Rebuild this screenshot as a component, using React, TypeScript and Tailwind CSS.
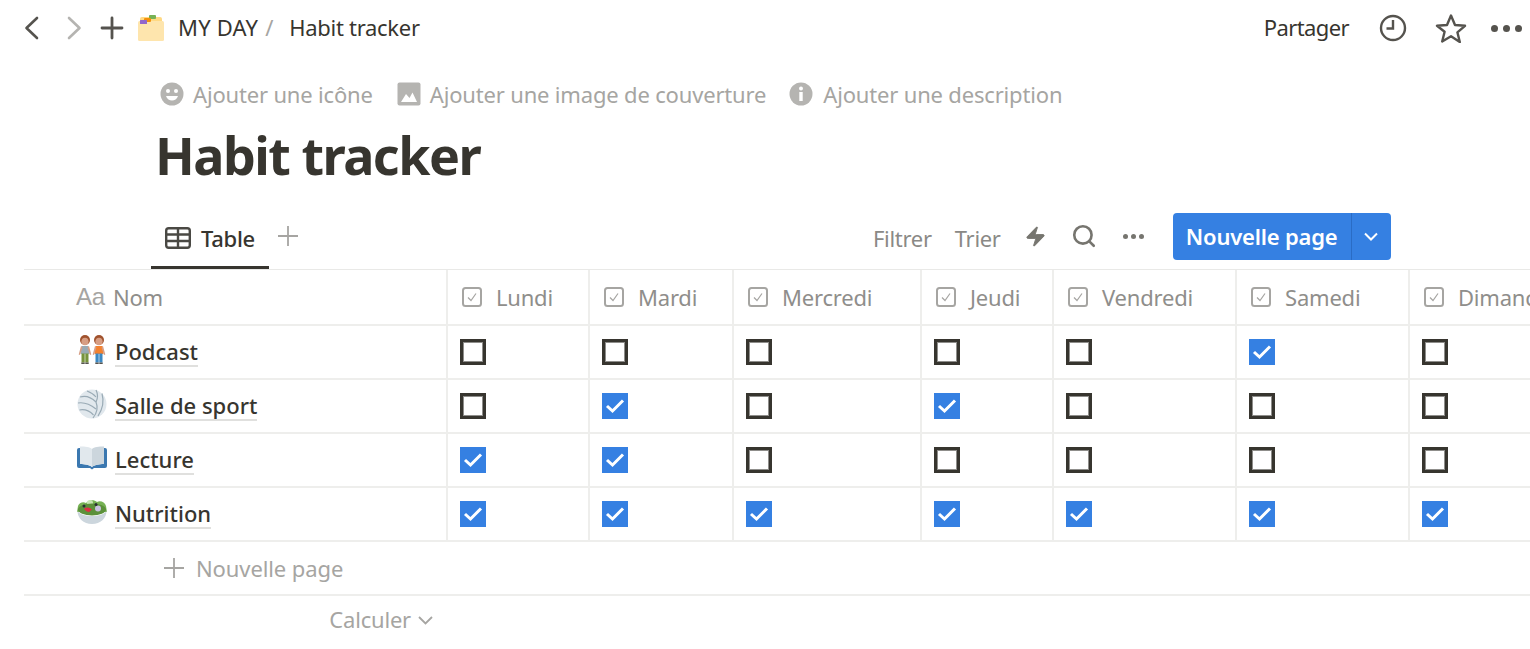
import React from 'react';
import { Search, Zap } from 'lucide-react';

const columns = [
  { name: 'Lundi', width: 'w-[142px]' },
  { name: 'Mardi', width: 'w-[144px]' },
  { name: 'Mercredi', width: 'w-[188px]' },
  { name: 'Jeudi', width: 'w-[132px]' },
  { name: 'Vendredi', width: 'w-[183px]' },
  { name: 'Samedi', width: 'w-[173px]' },
  { name: 'Dimanche', width: 'w-[160px]' },
];

function PeopleIcon() {
  const person = (x: number, shirt: string, legs: string) => (
    <g transform={`translate(${x} 0)`}>
      <circle cx="6.500" cy="5" r="5" fill="#a0522d" />
      <ellipse cx="6.500" cy="6.500" rx="3.600" ry="3.800" fill="#d79e84" />
      <path d="M3 11h7l1 8H2z" fill={shirt} />
      <path d="M2.500 11l-2.300 8.500 1.300.4 2.500-7.500zM10.500 11l2.300 8.500-1.300.4-2.500-7.500z" fill="#d79e84" />
      <rect x="3" y="18.500" width="3.200" height="9" fill={legs} />
      <rect x="6.800" y="18.500" width="3.200" height="9" fill={legs} />
      <rect x="2.800" y="27.500" width="3.400" height="1.500" fill="#55534e" />
      <rect x="6.800" y="27.500" width="3.400" height="1.500" fill="#55534e" />
    </g>
  );
  return (
    <svg width="28" height="30" viewBox="0 0 28 30" className="block">
      {person(0.500, '#99aab5', '#77933c')}
      {person(14.500, '#f4812e', '#3b88c3')}
    </svg>
  );
}

function BallIcon() {
  return (
    <svg width="30" height="30" viewBox="0 0 30 30" className="block">
      <circle cx="15" cy="15" r="14.500" fill="#e1e8ed" />
      <g fill="none" stroke="#99aab5" strokeWidth="1.200">
        <path d="M19 13C14 8 9 6 3 8" />
        <path d="M19 13c2-4 2-8 0-12" />
        <path d="M19 13c2 5 1 11-3 16" />
        <path d="M10 2c4 1.500 7 3.500 9 6" />
        <path d="M25 4.500c2 7 1 15-4 22.500" />
        <path d="M1 14c6-1 13 2 18 6" />
        <path d="M2.500 21c5-1 10 1 14 5" />
      </g>
    </svg>
  );
}

function BookIcon() {
  return (
    <svg width="30" height="24" viewBox="0 0 30 24" className="block">
      <path d="M0 4a2 2 0 0 1 2-2h1v16c5 0 10 1 12 3 2-2 7-3 12-3V2h1a2 2 0 0 1 2 2v16a2 2 0 0 1-2 2H17l-2 1.500-2-1.500H2a2 2 0 0 1-2-2z" fill="#3b78b0" />
      <path d="M3 .5c5 0 10 .5 12 2.500v18c-2-2-7-3-12-3z" fill="#e1e8ed" />
      <path d="M27 .5c-5 0-10 .5-12 2.500v18c2-2 7-3 12-3z" fill="#ccd6dd" />
    </svg>
  );
}

function SaladIcon() {
  return (
    <svg width="30" height="26" viewBox="0 0 30 26" className="block">
      <path d="M1 7c1-3 5-5 8-3 2-3 8-4 11-1 3-2 8 0 9 4l1 6H0z" fill="#77b255" />
      <circle cx="13" cy="4" r="3" fill="#c6e5b3" />
      <ellipse cx="15" cy="10.500" rx="14" ry="6" fill="#5c913b" />
      <path d="M7 9.500c3-2 6-1 8 1l-3 2.500c-2 0-4-1.500-5-3.500z" fill="#dd2e44" />
      <circle cx="21" cy="9.500" r="3" fill="#c8c0e0" />
      <circle cx="7" cy="7" r="1.500" fill="#292f33" />
      <circle cx="19" cy="5.500" r="1.500" fill="#292f33" />
      <path d="M.5 12c2 3 8 5 14.500 5s12.500-2 14.500-5c0 7-6 13-14.500 13S.5 19 .5 12z" fill="#ccd6dd" />
    </svg>
  );
}

function FolderIcon() {
  return (
    <svg width="28" height="28" viewBox="0 0 28 28" className="block">
      <path d="M3 5a2 2 0 0 1 2-2h18a2 2 0 0 1 2 2v4H3z" fill="#ffd983" />
      <rect x="1" y="7" width="26" height="20" rx="1.500" fill="#fee5ad" />
      <rect x="12" y="1" width="7" height="4" rx="1" fill="#77b255" />
      <rect x="7" y="4" width="7" height="4" rx="1" fill="#f4900c" />
      <rect x="3" y="6" width="7" height="4" rx="0.500" fill="#9266cc" />
    </svg>
  );
}

function TableIcon() {
  return (
    <svg width="26" height="22" viewBox="0 0 26 22" className="block" fill="none" stroke="#4a4944" strokeWidth="2.400">
      <rect x="1.200" y="1.200" width="23.600" height="19.600" rx="2.500" />
      <path d="M1 7.500h24M1 14h24M13 1v20" />
    </svg>
  );
}

function PropIcon() {
  return (
    <svg width="20" height="20" viewBox="0 0 20 20" className="block shrink-0" fill="none" stroke="#a6a5a2">
      <rect x="1" y="1" width="18" height="18" rx="2.500" strokeWidth="2" />
      <path d="M6 10.500l3 3 5-7" strokeWidth="1.200" />
    </svg>
  );
}

function Checkbox({ checked }: { checked: boolean }) {
  if (checked) {
    return (
      <div className="w-[26px] h-[26px] bg-[#3580e2] flex items-center justify-center">
        <svg width="20" height="16" viewBox="0 0 20 16" fill="none" stroke="white" strokeWidth="3">
          <path d="M2 8l5.500 5L18 2.500" />
        </svg>
      </div>
    );
  }
  return <div className="w-[26px] h-[26px] border-[3px] border-[#37352f] outline outline-1 -outline-offset-4 outline-[#8f8e8b]" />;
}

const rows = [
  { name: 'Podcast', icon: <PeopleIcon />, values: [0, 0, 0, 0, 0, 1, 0] },
  { name: 'Salle de sport', icon: <BallIcon />, values: [0, 1, 0, 1, 0, 0, 0] },
  { name: 'Lecture', icon: <BookIcon />, values: [1, 1, 0, 0, 0, 0, 0] },
  { name: 'Nutrition', icon: <SaladIcon />, values: [1, 1, 1, 1, 1, 1, 1] },
];

export default function App() {
  return (
    <div className="w-[1530px] h-[649px] overflow-hidden bg-white text-[#37352f] font-['Noto_Sans','Open_Sans',sans-serif]">
      {/* topbar */}
      <div className="h-[56px] flex items-center justify-between pl-[24px] pr-[8px]">
        <div className="flex items-center">
          <svg width="16" height="24" viewBox="0 0 16 24" fill="none" stroke="#55534e" strokeWidth="2.600" strokeLinecap="round" strokeLinejoin="round" className="block">
            <path d="M13 2L2.500 12 13 22" />
          </svg>
          <svg width="16" height="24" viewBox="0 0 16 24" fill="none" stroke="#b5b4b1" strokeWidth="2.600" strokeLinecap="round" strokeLinejoin="round" className="block ml-[26px]">
            <path d="M3 2l10.500 10L3 22" />
          </svg>
          <svg width="24" height="24" viewBox="0 0 24 24" fill="none" stroke="#55534e" strokeWidth="2.800" strokeLinecap="round" className="block ml-[18px]">
            <path d="M12 2v20M2 12h20" />
          </svg>
          <div className="ml-[13px]"><FolderIcon /></div>
          <span className="ml-[13px] mb-[2px] text-[22px] tracking-[0.2px]">MY DAY</span>
          <span className="ml-[7px] mb-[2px] text-[22px] text-[#a6a5a2]">/</span>
          <span className="ml-[16px] mb-[2px] text-[22px] tracking-[-0.3px]">Habit tracker</span>
        </div>
        <div className="flex items-center">
          <span className="mb-[2px] text-[22px] tracking-[-0.6px]">Partager</span>
          <svg width="28" height="28" viewBox="0 0 28 28" fill="none" stroke="#55534e" strokeWidth="2.400" className="block ml-[30px]">
            <circle cx="14" cy="14" r="12" />
            <path d="M14 6v8.500H7.500" />
          </svg>
          <svg width="32" height="30" viewBox="0 0 32 30" fill="none" stroke="#55534e" strokeWidth="2.400" strokeLinejoin="round" className="block ml-[28px]">
            <path d="M16 2.500l4 9.500 10 .8-7.600 6.500 2.400 9.700L16 23.300l-8.800 5.200 2.400-9.700L2 12.800l10-.8z" />
          </svg>
          <div className="ml-[24px] flex gap-[5px]">
            <div className="w-[7px] h-[7px] rounded-full bg-[#55534e]" />
            <div className="w-[7px] h-[7px] rounded-full bg-[#55534e]" />
            <div className="w-[7px] h-[7px] rounded-full bg-[#55534e]" />
          </div>
        </div>
      </div>

      {/* page actions */}
      <div className="mt-[23px] ml-[160px] h-[30px] flex items-center text-[#a6a5a2] text-[22px] tracking-[-0.17px]">
        <svg width="24" height="24" viewBox="0 0 24 24" className="block">
          <circle cx="12" cy="12" r="11.500" fill="#b5b4b1" />
          <circle cx="8" cy="9" r="2" fill="white" />
          <circle cx="16" cy="9" r="2" fill="white" />
          <path d="M6 14h12c-1 3-3.500 4.500-6 4.500S7 17 6 14z" fill="white" />
        </svg>
        <span className="ml-[9px]">Ajouter une icône</span>
        <svg width="24" height="24" viewBox="0 0 24 24" className="block ml-[24px]">
          <rect x="0.500" y="0.500" width="23" height="23" rx="2" fill="#b5b4b1" />
          <path d="M4 20l5-8 3.500 4 3-5.500L20 20z" fill="white" />
        </svg>
        <span className="ml-[9px]">Ajouter une image de couverture</span>
        <svg width="24" height="24" viewBox="0 0 24 24" className="block ml-[23px]">
          <circle cx="12" cy="12" r="11.500" fill="#b5b4b1" />
          <circle cx="12" cy="6.500" r="2" fill="white" />
          <rect x="10.300" y="10" width="3.400" height="9" fill="white" />
        </svg>
        <span className="ml-[10px]">Ajouter une description</span>
      </div>

      {/* title */}
      <h1 className="ml-[155px] mt-[13px] h-[66px] text-[52px] leading-[66px] font-bold tracking-[-1.5px]">Habit tracker</h1>

      {/* view bar */}
      <div className="mt-[24px] h-[57px] flex items-start">
        <div className="ml-[151px] w-[118px] h-[57px] border-b-[3px] border-[#37352f] flex items-center pl-[14px] pb-[2px]">
          <TableIcon />
          <span className="ml-[10px] text-[22px] font-medium tracking-[-0.3px]">Table</span>
        </div>
        <svg width="22" height="22" viewBox="0 0 22 22" fill="none" stroke="#a6a5a2" strokeWidth="1.800" className="block ml-[8px] mt-[13px]">
          <path d="M11 1v20M1 11h20" />
        </svg>
        <div className="ml-[574px] h-[48px] flex items-center text-[#8a8986] text-[22px] tracking-[-0.3px]">
          <span className="mt-[5px]">Filtrer</span>
          <span className="ml-[23px] mt-[5px]">Trier</span>
          <Zap size={23} fill="#76756f" stroke="#76756f" strokeWidth={1} className="ml-[23px]" />
          <Search size={26} stroke="#76756f" strokeWidth={2.400} className="ml-[24px]" />
          <div className="ml-[26px] flex gap-[3px]">
            <div className="w-[5px] h-[5px] rounded-full bg-[#76756f]" />
            <div className="w-[5px] h-[5px] rounded-full bg-[#76756f]" />
            <div className="w-[5px] h-[5px] rounded-full bg-[#76756f]" />
          </div>
          <div className="ml-[29px] w-[218px] h-[47px] rounded-[4px] bg-[#3580e2] flex items-stretch text-white text-[22px] font-semibold tracking-[-0.2px]">
            <div className="w-[179px] flex items-center justify-center border-r border-[#2a6cc5] whitespace-nowrap">Nouvelle page</div>
            <div className="flex-1 flex items-center justify-center">
              <svg width="14" height="9" viewBox="0 0 14 9" fill="none" stroke="white" strokeWidth="2" className="block">
                <path d="M1 1.500l6 6 6-6" />
              </svg>
            </div>
          </div>
        </div>
      </div>

      {/* table */}
      <div className="ml-[24px] border-t border-[#e9e9e7]">
        <div className="h-[56px] flex border-b-2 border-[#eeeeec]">
          <div className="w-[422px] shrink-0 flex items-center pl-[52px] text-[#8f8e8b] text-[22px] tracking-[-0.2px]">
            <span className="font-['Liberation_Sans',sans-serif] text-[24px] text-[#a6a5a2]">Aa</span>
            <span className="ml-[8px]">Nom</span>
          </div>
          {columns.map((col) => (
            <div key={col.name} className={`${col.width} shrink-0 border-l-2 border-[#eeeeec] flex items-center pl-[14px] text-[#8f8e8b] text-[22px] tracking-[-0.2px] overflow-hidden whitespace-nowrap`}>
              <PropIcon />
              <span className="ml-[14px]">{col.name}</span>
            </div>
          ))}
        </div>
        {rows.map((row) => (
          <div key={row.name} className="h-[54px] flex border-b-2 border-[#eeeeec]">
            <div className="w-[422px] shrink-0 flex items-center pl-[52px]">
              <div className="w-[32px] flex justify-center -mt-[5px]">{row.icon}</div>
              <span className="ml-[7px] text-[22px] font-medium tracking-[0px] leading-[28px] border-b-2 border-[#e0e0de]">{row.name}</span>
            </div>
            {row.values.map((v, i) => (
              <div key={i} className={`${columns[i].width} shrink-0 border-l-2 border-[#eeeeec] flex items-center pl-[12px]`}>
                <Checkbox checked={v === 1} />
              </div>
            ))}
          </div>
        ))}
        <div className="h-[54px] flex items-center border-b-2 border-[#eeeeec] pl-[139px] text-[#a6a5a2] text-[22px] tracking-[-0.1px]">
          <svg width="22" height="22" viewBox="0 0 22 22" fill="none" stroke="#a6a5a2" strokeWidth="1.800" className="block">
            <path d="M11 1v20M1 11h20" />
          </svg>
          <span className="ml-[11px]">Nouvelle page</span>
        </div>
        <div className="h-[50px] w-[409px] pb-[4px] flex items-center justify-end text-[#a6a5a2] text-[22px] tracking-[-0.2px]">
          <span>Calculer</span>
          <svg width="15" height="9" viewBox="0 0 15 9" fill="none" stroke="#a6a5a2" strokeWidth="1.800" className="block ml-[7px] mt-[2px]">
            <path d="M1 1l6.500 6.500L14 1" />
          </svg>
        </div>
      </div>
    </div>
  );
}
